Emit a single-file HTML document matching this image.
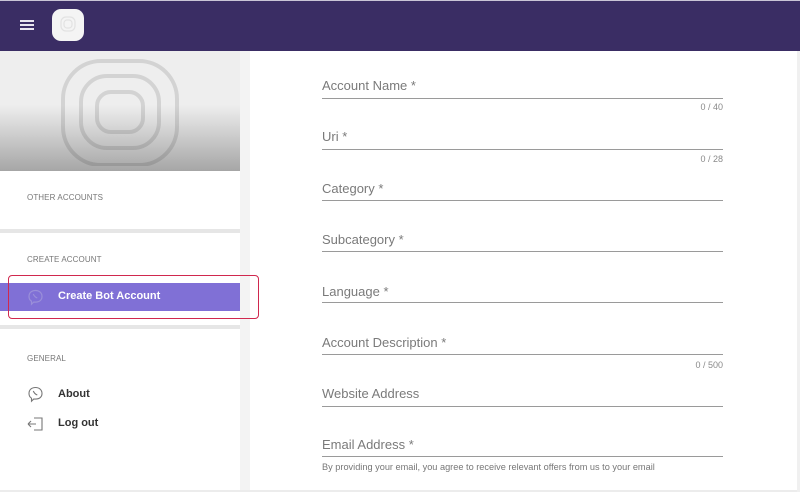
<!DOCTYPE html>
<html><head><meta charset="utf-8"><style>
*{margin:0;padding:0;box-sizing:border-box}
body{width:800px;height:492px;background:#fff;font-family:"Liberation Sans",Arial,sans-serif;position:relative;overflow:hidden}
.hdr{position:absolute;left:0;top:0;width:800px;height:51px;background:#3a2d64;border-top:1px solid #c9c4d6}
.abs{position:absolute}
.lab{position:absolute;left:322px;font-size:13px;color:#7a7a7a}
.ln{position:absolute;left:322px;width:401px;height:1px;background:#9a9a9a}
.cnt{position:absolute;right:77px;font-size:9px;color:#8a8a8a}
.sec{position:absolute;left:27px;font-size:8px;color:#777;letter-spacing:.1px}
</style></head><body>
<div class="hdr">
 <div class="abs" style="left:20px;top:19px;width:14px;height:2px;background:#e8e6ee;box-shadow:0 4px 0 #e8e6ee,0 8px 0 #e8e6ee"></div>
 <div class="abs" style="left:52px;top:8px;width:32px;height:32px;border-radius:9px;background:#f4f4f4"></div>
 <svg class="abs" style="left:59px;top:14px" width="18" height="18" viewBox="0 0 18 18"><g fill="none" stroke="#e2e2e2" stroke-width="1.2"><rect x="2" y="2" width="14" height="14" rx="5"/><rect x="5" y="5" width="8" height="8" rx="3"/></g></svg>
</div>
<!-- sidebar -->
<div class="abs" style="left:0;top:51px;width:240px;height:120px;background:linear-gradient(#eeeeee 0%,#eeeeee 45%,#a6a6a6 100%)"></div>
<svg class="abs" style="left:60px;top:58px" width="120" height="108" viewBox="0 0 120 108"><g fill="none" stroke="rgba(0,0,0,0.11)" stroke-width="4"><rect x="3" y="3" width="114" height="104" rx="38"/><rect x="21" y="18" width="78" height="72" rx="26"/><rect x="37" y="34" width="46" height="40" rx="14"/></g></svg>
<div class="abs" style="left:240px;top:51px;width:10px;height:441px;background:#f3f3f3"></div>
<div class="sec" style="top:193px">OTHER ACCOUNTS</div>
<div class="abs" style="left:0;top:229px;width:240px;height:4px;background:#e6e6e6"></div>
<div class="sec" style="top:255px">CREATE ACCOUNT</div>
<div class="abs" style="left:0;top:283px;width:240px;height:28px;background:#8070d6"></div>
<svg class="abs" style="left:27px;top:289px" width="17" height="17" viewBox="0 0 17 17"><path d="M8.5 1.5C4.5 1.5 2 3.8 2 7.5c0 2.3 1 3.8 2.5 4.7v3l2.3-2.2c.6.1 1.1.1 1.7.1 4 0 6.5-2.2 6.5-5.6S12.5 1.5 8.5 1.5z" fill="none" stroke="#9a8fd9" stroke-width="1.2"/><path d="M6.3 5c.8 2 2 3.3 4 4" fill="none" stroke="#9a8fd9" stroke-width="1.1"/></svg>
<div class="abs" style="left:58px;top:290px;font-size:11px;font-weight:bold;color:#fff">Create Bot Account</div>
<div class="abs" style="left:8px;top:275px;width:251px;height:44px;border:1.5px solid #d0284e;border-radius:4px"></div>
<div class="abs" style="left:0;top:325px;width:240px;height:4px;background:#e6e6e6"></div>
<div class="sec" style="top:354px">GENERAL</div>
<svg class="abs" style="left:27px;top:386px" width="17" height="18" viewBox="0 0 17 18"><path d="M8.5 1.5C4.5 1.5 2 3.8 2 7.5c0 2.3 1 3.8 2.5 4.7v3l2.3-2.2c.6.1 1.1.1 1.7.1 4 0 6.5-2.2 6.5-5.6S12.5 1.5 8.5 1.5z" fill="none" stroke="#777" stroke-width="1.1"/><path d="M6.3 5c.8 2 2 3.3 4 4" fill="none" stroke="#777" stroke-width="1.1"/></svg>
<div class="abs" style="left:58px;top:388px;font-size:11px;font-weight:bold;color:#333">About</div>
<svg class="abs" style="left:27px;top:416px" width="17" height="16" viewBox="0 0 17 16"><path d="M7 2h8v12H7M1 8h8M1 8l3-3M1 8l3 3" fill="none" stroke="#777" stroke-width="1.1"/></svg>
<div class="abs" style="left:58px;top:417px;font-size:11px;font-weight:bold;color:#333">Log out</div>
<div class="abs" style="left:0;top:490px;width:800px;height:2px;background:#ececec"></div>
<div class="abs" style="left:797px;top:51px;width:3px;height:441px;background:#f0f0f0"></div>
<!-- form -->
<div class="lab" style="top:78px">Account Name *</div><div class="ln" style="top:98px"></div><div class="cnt" style="top:102px">0 / 40</div>
<div class="lab" style="top:129px">Uri *</div><div class="ln" style="top:149px"></div><div class="cnt" style="top:154px">0 / 28</div>
<div class="lab" style="top:181px">Category *</div><div class="ln" style="top:200px"></div>
<div class="lab" style="top:232px">Subcategory *</div><div class="ln" style="top:251px"></div>
<div class="lab" style="top:284px">Language *</div><div class="ln" style="top:302px"></div>
<div class="lab" style="top:335px">Account Description *</div><div class="ln" style="top:354px"></div><div class="cnt" style="top:360px">0 / 500</div>
<div class="lab" style="top:386px">Website Address</div><div class="ln" style="top:406px"></div>
<div class="lab" style="top:437px">Email Address *</div><div class="ln" style="top:456px"></div>
<div class="abs" style="left:322px;top:462px;font-size:9.2px;color:#777">By providing your email, you agree to receive relevant offers from us to your email</div>
</body></html>
